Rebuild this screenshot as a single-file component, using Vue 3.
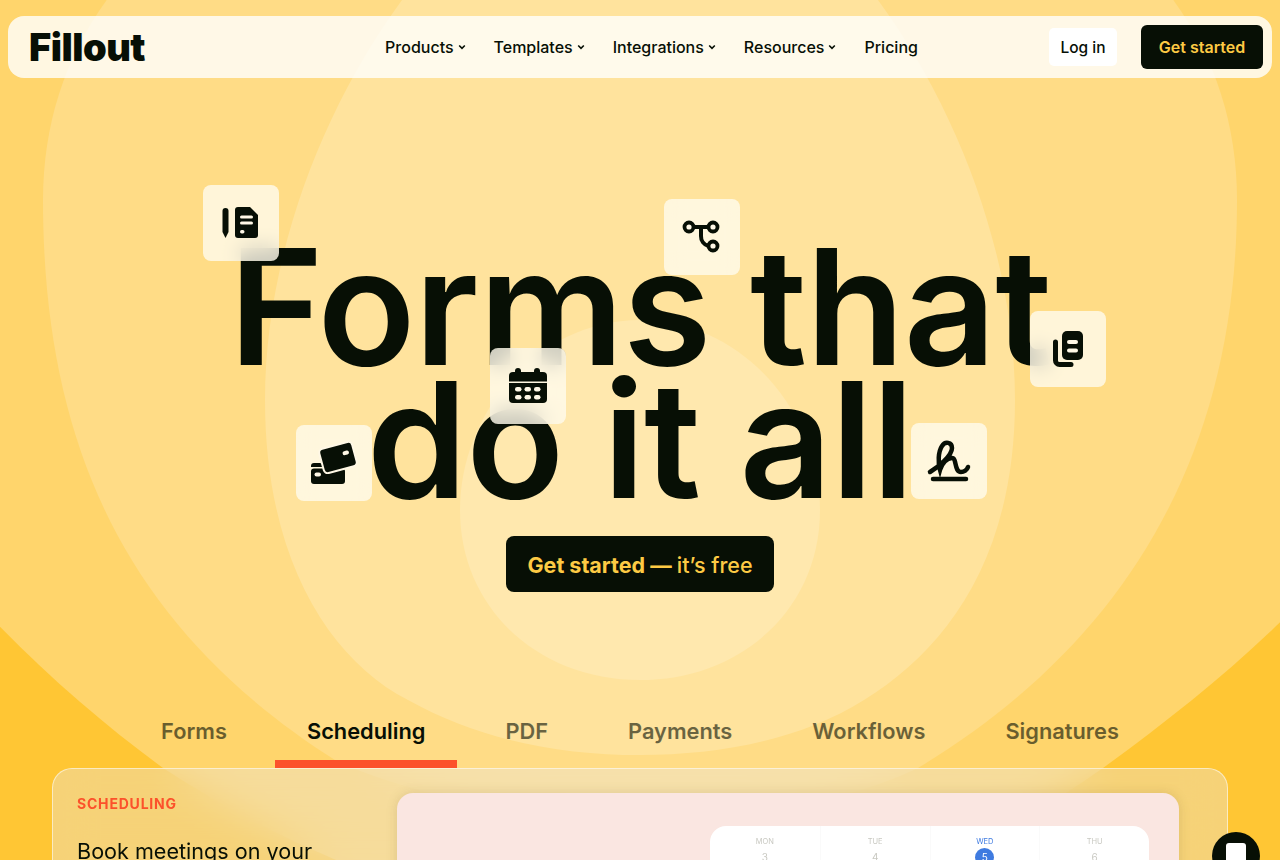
<template>
  <div class="page">
    <svg class="bg" viewBox="0 0 1280 860" aria-hidden="true">
      <path fill="#ffd56c" d="M-120 -100H1400V480C1320 600 1210 690 1103 768C960 870 780 930 640 930C500 930 320 870 163 768C70 700 -40 600 -120 480Z" />
      <path fill="#ffdc86" d="M640 -200C250 -200 43 -30 43 200C43 450 130 630 335 760C420 800 530 815 640 815C750 815 840 805 918 768C1130 640 1237 450 1237 200C1237 -30 1030 -200 640 -200Z" />
      <path fill="#ffe39d" d="M640 -160C470 -160 265 130 265 400C265 560 330 660 408 700C480 740 560 755 640 755C720 755 800 740 864 700C945 650 1015 560 1015 400C1015 130 810 -160 640 -160Z" />
      <path fill="#ffe8ae" d="M640 320C540 320 460 410 460 510C460 610 540 680 640 680C740 680 820 610 820 510C820 410 740 320 640 320Z" />
    </svg>

    <header class="nav">
      <div class="logo">Fillout</div>
      <nav class="links">
        <a v-for="item in navItems" :key="item" class="link">
          {{ item }}
          <svg class="chev" viewBox="0 0 8 6"><path d="M1.2 1.5 4 4.3l2.8-2.8" /></svg>
        </a>
        <a class="link">Pricing</a>
      </nav>
      <div class="actions">
        <button class="login">Log in</button>
        <button class="start">Get started</button>
      </div>
    </header>

    <section class="hero">
      <h1>Forms that<br />do it all</h1>
      <button class="cta">Get started — <span>it’s free</span></button>
    </section>

    <div class="tile tile-notes">
      <svg viewBox="0 0 76 76">
        <path class="ink" d="M19.500 26a3 3 0 0 1 6 0v21l-3 6-3-6z" />
        <path class="ink" d="M35 22h12l8 8v20a3 3 0 0 1-3 3H35a3 3 0 0 1-3-3V25a3 3 0 0 1 3-3z" />
        <rect class="cut" x="37" y="30.500" width="13" height="3" rx="1.500" />
        <rect class="cut" x="37" y="36.500" width="13" height="3" rx="1.500" />
        <rect class="cut" x="37" y="45" width="4.500" height="3.500" rx="1.700" />
      </svg>
    </div>
    <div class="tile tile-flow">
      <svg viewBox="0 0 76 76">
        <path class="line" d="M30 28h14M37 28v9a10 10 0 0 0 7.500 10" />
        <circle class="ring" cx="25" cy="28" r="4.500" />
        <circle class="ring" cx="49" cy="28" r="4.500" />
        <circle class="ring" cx="49" cy="47" r="4.500" />
      </svg>
    </div>
    <div class="tile tile-docs">
      <svg viewBox="0 0 76 76">
        <path class="line wide" d="M25.500 31v18.500a4 4 0 0 0 4 4H41" />
        <rect class="ink" x="32" y="20" width="21" height="29" rx="5" />
        <rect class="cut" x="37" y="29" width="11" height="4" rx="2" />
        <rect class="cut" x="37" y="37.500" width="11" height="4" rx="2" />
      </svg>
    </div>
    <div class="tile tile-calendar">
      <svg viewBox="0 0 76 76">
        <rect class="ink" x="25" y="20" width="6" height="8" rx="3" />
        <rect class="ink" x="44" y="20" width="6" height="8" rx="3" />
        <path class="ink" d="M19 33.500V28a4 4 0 0 1 4-4h30a4 4 0 0 1 4 4v5.500z" />
        <path class="ink" d="M19 35h38v16a4 4 0 0 1-4 4H23a4 4 0 0 1-4-4z" />
        <g class="cut">
          <rect x="25" y="39" width="6.500" height="4.500" rx="2.200" />
          <rect x="34.500" y="39" width="6.500" height="4.500" rx="2.200" />
          <rect x="44" y="39" width="6.500" height="4.500" rx="2.200" />
          <rect x="25" y="47" width="6.500" height="4.500" rx="2.200" />
          <rect x="34.500" y="47" width="6.500" height="4.500" rx="2.200" />
          <rect x="44" y="47" width="6.500" height="4.500" rx="2.200" />
        </g>
      </svg>
    </div>
    <div class="tile tile-cards">
      <svg viewBox="0 0 76 76">
        <path class="ink" d="M18 38h6a2 2 0 0 1 2 2v2H15v-1a3 3 0 0 1 3-3z" />
        <rect class="ink" x="15" y="43.500" width="34" height="15.500" rx="3" />
        <rect class="cut" x="18.500" y="47.500" width="6.500" height="4" rx="2" />
        <g transform="rotate(-15 42 32.500)">
          <rect class="ink edge" x="25" y="20" width="34" height="25" rx="4" />
          <rect class="cut" x="47.500" y="28" width="6.500" height="4" rx="2" />
        </g>
      </svg>
    </div>
    <div class="tile tile-sign">
      <svg viewBox="0 0 76 76">
        <path class="line thick" d="M19 49C27 44 41 33 41 25C41 19 34 18 31 23C27 29 27 40 29 47C31 40 36 35 41 35C46 35 43 49 50 49C53 49 56 47 57 44" />
        <path class="line thick" d="M22 56h33" />
      </svg>
    </div>

    <div class="tabs">
      <a v-for="tab in tabs" :key="tab" class="tab" :class="{ active: tab === 'Scheduling' }">{{ tab }}</a>
    </div>

    <section class="card">
      <div class="copy">
        <div class="eyebrow">SCHEDULING</div>
        <p>Book meetings on your</p>
      </div>
      <div class="panel">
        <div class="calendar">
          <div v-for="day in days" :key="day.name" class="day" :class="{ today: day.today }">
            <span class="name">{{ day.name }}</span>
            <span class="num">{{ day.num }}</span>
          </div>
        </div>
      </div>
    </section>

    <div class="chat"><span class="bubble"></span></div>
  </div>
</template>

<script setup>
const navItems = ['Products', 'Templates', 'Integrations', 'Resources']
const tabs = ['Forms', 'Scheduling', 'PDF', 'Payments', 'Workflows', 'Signatures']
const days = [
  { name: 'MON', num: 3 },
  { name: 'TUE', num: 4 },
  { name: 'WED', num: 5, today: true },
  { name: 'THU', num: 6 }
]
</script>

<style>
html, body { margin: 0; }
</style>

<style scoped>
.page {
  position: relative;
  height: 860px;
  overflow: hidden;
  background: #ffc634;
  color: #070f05;
  font-family: Inter, "Liberation Sans", sans-serif;
}

.bg {
  position: absolute;
  inset: 0;
  width: 100%;
  height: 100%;
}

.nav {
  position: relative;
  height: 62px;
  margin: 16px 8px 0;
  padding: 0 9px 0 21px;
  display: grid;
  grid-template-columns: 1fr auto 1fr;
  align-items: center;
  background: rgba(255, 255, 255, 0.8);
  border-radius: 16px;
}

.logo {
  font-size: 38px;
  font-weight: 900;
  letter-spacing: -0.5px;
  line-height: 1;
}

.links {
  display: flex;
  gap: 28px;
  margin-left: 11px;
}

.link {
  display: flex;
  align-items: center;
  gap: 4px;
  font-size: 16px;
  font-weight: 500;
}

.chev {
  width: 8px;
  height: 6px;
  fill: none;
  stroke: #070f05;
  stroke-width: 1.6;
}

.actions {
  display: flex;
  justify-content: flex-end;
  align-items: center;
  gap: 24px;
}

button {
  border: none;
  font-family: inherit;
}

.login {
  width: 68px;
  height: 38px;
  background: #fff;
  border-radius: 5px;
  color: #070f05;
  font-size: 15.500px;
  font-weight: 500;
}

.start {
  width: 122px;
  height: 44px;
  background: #070f05;
  border-radius: 6px;
  color: #fdca44;
  font-size: 16px;
  font-weight: 600;
}

.hero {
  position: relative;
  display: flex;
  flex-direction: column;
  align-items: center;
  padding-top: 162px;
}

h1 {
  margin: 0;
  font-size: 161px;
  font-weight: 600;
  line-height: 133px;
  letter-spacing: -1px;
  text-align: center;
}

.cta {
  width: 268px;
  height: 56px;
  margin-top: 30px;
  padding-top: 2px;
  background: #070f05;
  border-radius: 8px;
  color: #fdca44;
  font-size: 21.500px;
  font-weight: 700;
}

.cta span {
  font-weight: 500;
}

.tile {
  position: absolute;
  width: 76px;
  height: 76px;
  background: rgba(255, 251, 238, 0.8);
  border-radius: 8px;
  backdrop-filter: blur(10px);
}

.tile svg {
  display: block;
  width: 76px;
  height: 76px;
}

.tile-notes { left: 203px; top: 185px; }
.tile-flow { left: 664px; top: 199px; }
.tile-docs { left: 1030px; top: 311px; }
.tile-calendar { left: 490px; top: 348px; }
.tile-cards { left: 296px; top: 425px; }
.tile-sign { left: 911px; top: 423px; }

.ink { fill: #070f05; }
.cut { fill: #fff8e6; }
.edge { stroke: #fff8e6; stroke-width: 2; }

.line {
  fill: none;
  stroke: #070f05;
  stroke-width: 4;
  stroke-linecap: round;
}

.wide { stroke-width: 5; }
.thick { stroke-width: 4.500; }

.ring {
  fill: #fff8e6;
  stroke: #070f05;
  stroke-width: 3.800;
}

.tabs {
  position: relative;
  display: flex;
  justify-content: center;
  gap: 16px;
  margin-top: 120px;
}

.tab {
  height: 56px;
  padding: 0 32px;
  box-sizing: border-box;
  border-bottom: 8px solid transparent;
  font-size: 21.800px;
  font-weight: 600;
  line-height: 38px;
  opacity: 0.6;
}

.tab.active {
  border-bottom-color: #fc512b;
  opacity: 1;
}

.card {
  position: relative;
  display: flex;
  gap: 32px;
  height: 300px;
  margin: 0 52px;
  padding: 24px 48px 0 24px;
  background: rgba(232, 232, 232, 0.38);
  border: 1px solid rgba(255, 255, 255, 0.55);
  border-radius: 20px;
  backdrop-filter: blur(20px);
}

.copy {
  width: 288px;
  flex: none;
}

.eyebrow {
  margin-top: 1px;
  color: #fc512b;
  font-size: 14px;
  font-weight: 700;
  letter-spacing: 0.8px;
  line-height: 20px;
}

.copy p {
  margin: 22px 0 0;
  font-size: 21.600px;
  line-height: 30px;
}

.panel {
  flex: 1;
  display: flex;
  justify-content: flex-end;
  padding: 33px 30px 0 0;
  background: #fae6e1;
  border-radius: 16px;
  box-shadow: 0 0 12px rgba(90, 70, 30, 0.16);
}

.calendar {
  width: 439px;
  height: 200px;
  display: grid;
  grid-template-columns: repeat(4, 1fr);
  background: #fff;
  border-radius: 16px;
}

.day {
  display: flex;
  flex-direction: column;
  align-items: center;
  padding-top: 11px;
  border-left: 1px solid #fafafa;
  color: #c9c9c2;
}

.day:first-child {
  border-left: none;
}

.name {
  font-size: 7.500px;
  line-height: 10px;
}

.num {
  width: 19px;
  height: 19px;
  margin-top: 1px;
  font-size: 10px;
  line-height: 19px;
  text-align: center;
}

.today .name {
  color: #3f7be0;
}

.today .num {
  background: #3f7be0;
  border-radius: 50%;
  color: #fff;
}

.chat {
  position: absolute;
  left: 1212px;
  top: 832px;
  width: 48px;
  height: 48px;
  background: #070f05;
  border-radius: 50%;
  display: flex;
  justify-content: center;
  padding-top: 11px;
  box-sizing: border-box;
}

.bubble {
  width: 20px;
  height: 20px;
  background: #fff;
  border-radius: 3px;
}
</style>
